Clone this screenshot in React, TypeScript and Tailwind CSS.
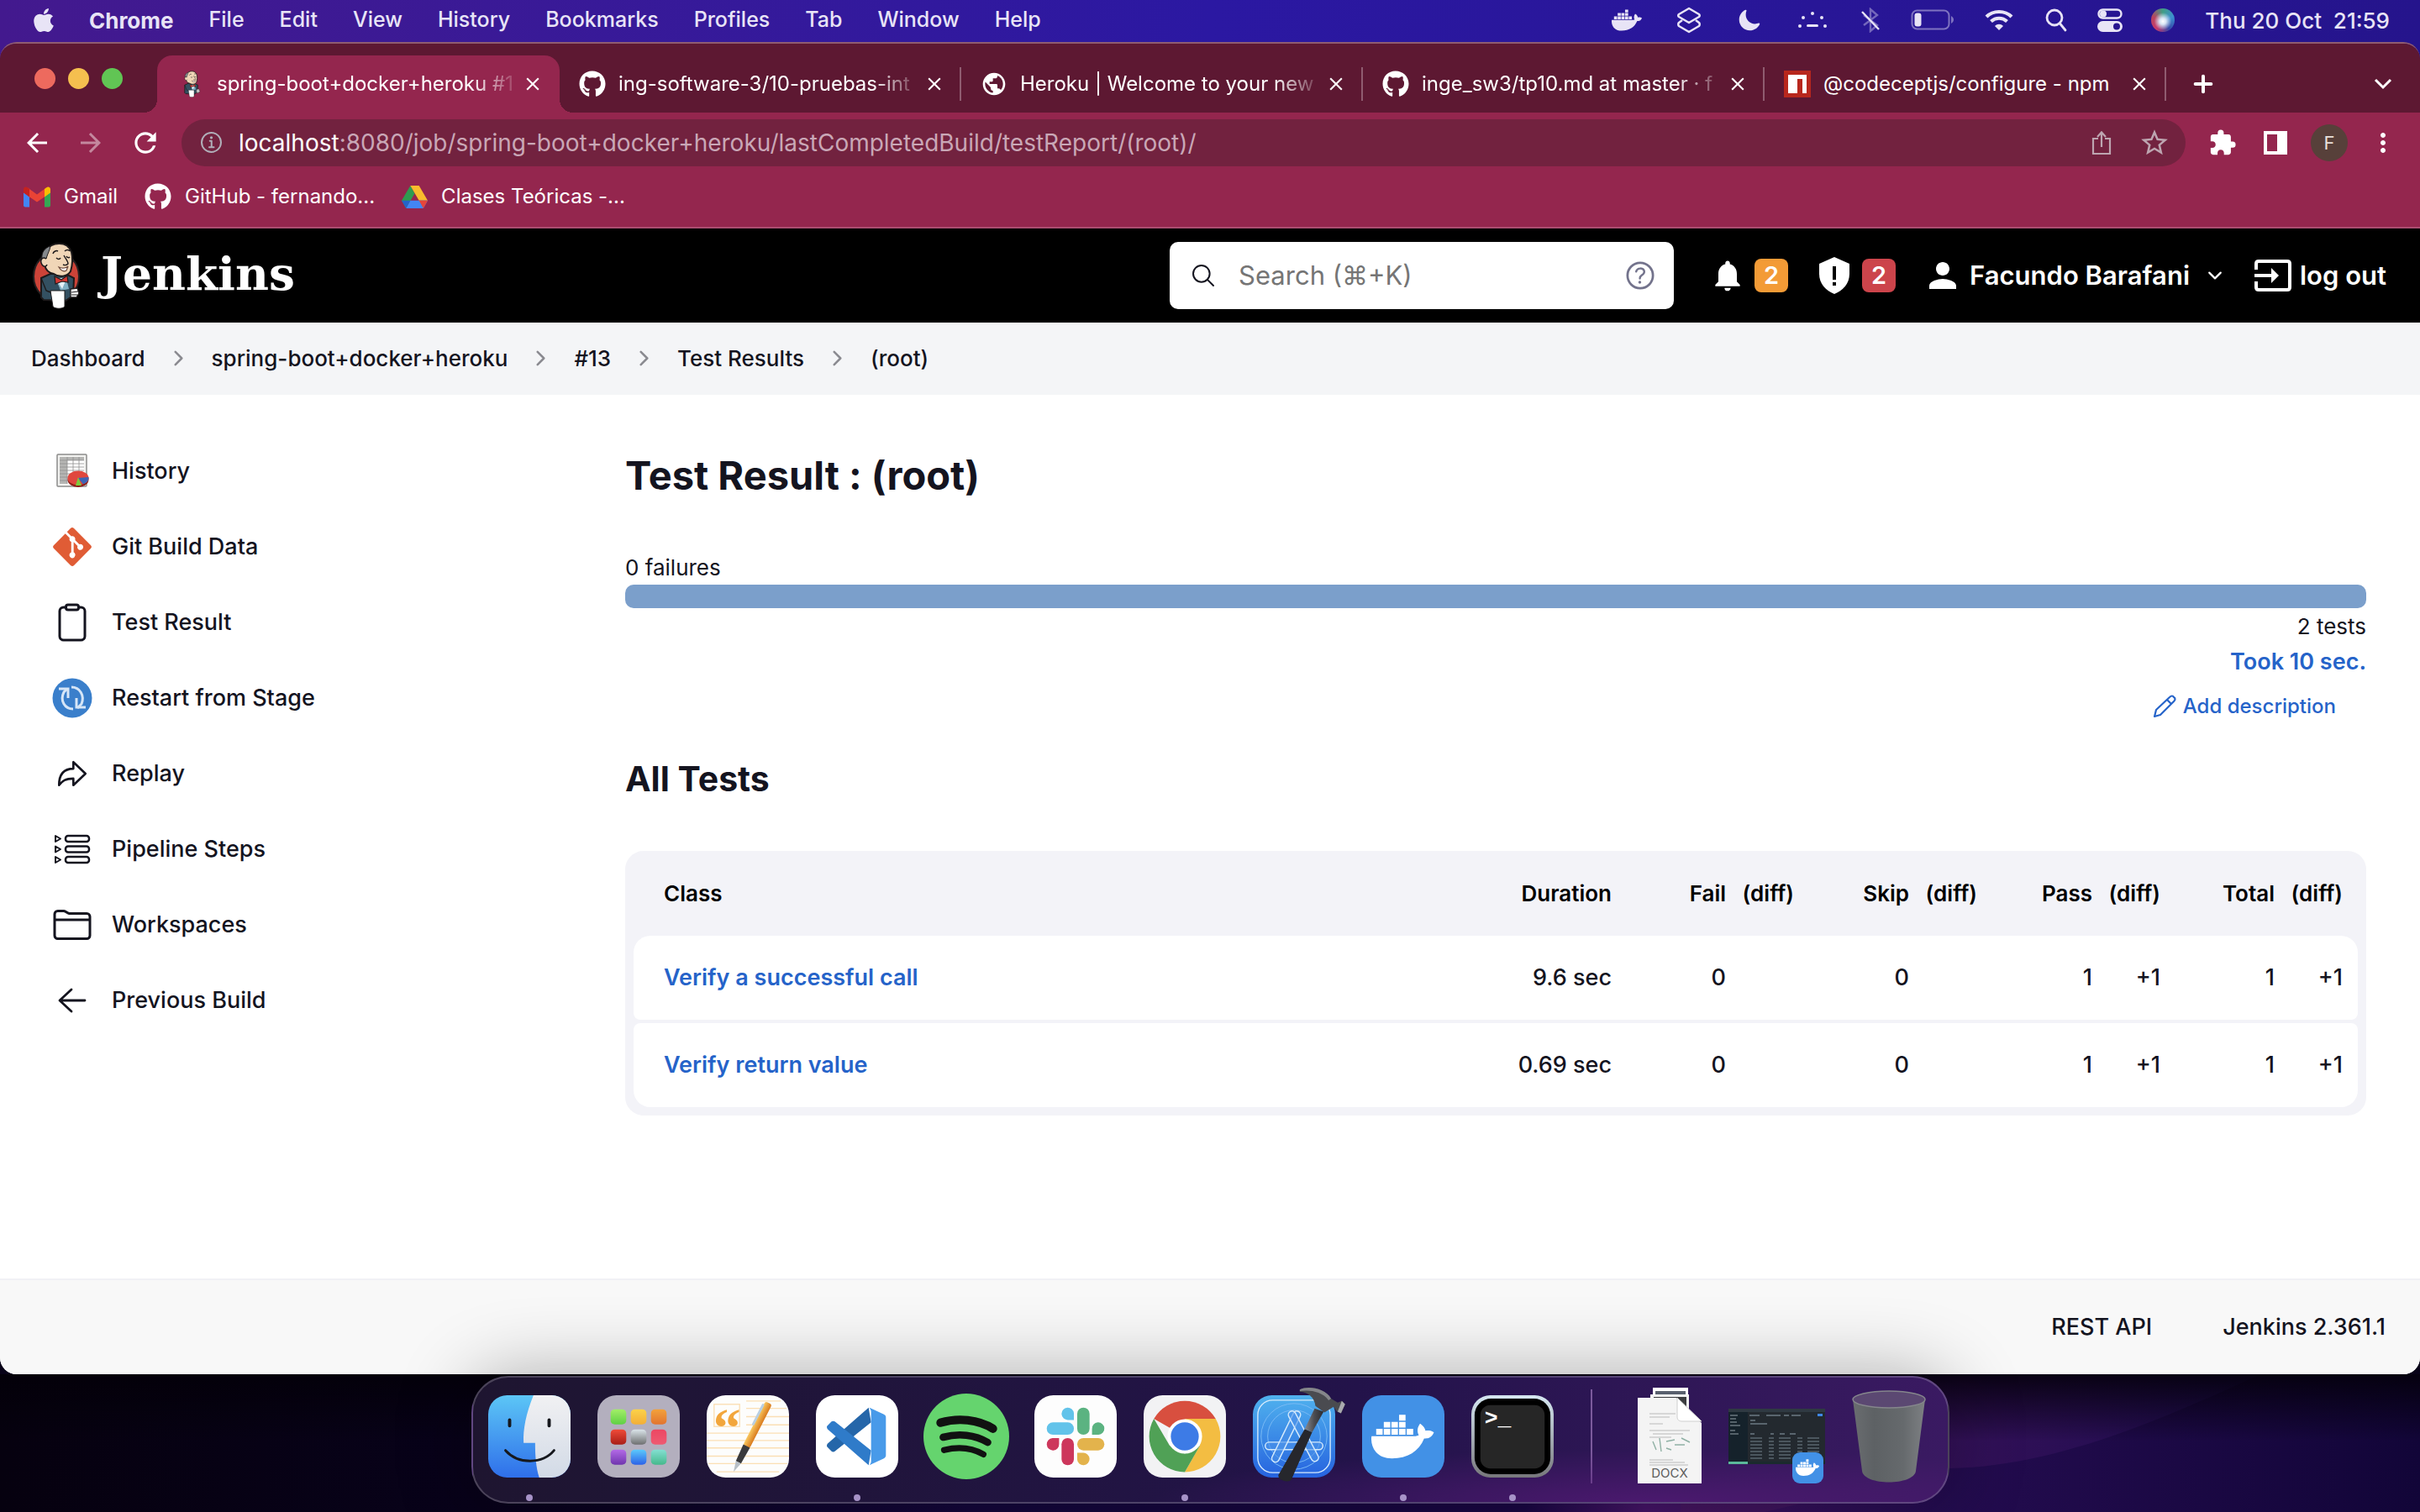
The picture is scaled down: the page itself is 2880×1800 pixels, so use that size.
import type { ReactNode } from "react";
import { FaApple, FaDocker, FaGithub, FaGitAlt } from "react-icons/fa";
import {
  MdArrowBack,
  MdArrowForward,
  MdClose,
  MdExtension,
  MdMoreVert,
  MdNotifications,
  MdPerson,
  MdPublic,
  MdRefresh,
  MdStarBorder,
} from "react-icons/md";
import {
  IoArrowRedoOutline,
  IoChevronDownOutline,
  IoChevronForwardOutline,
  IoClipboardOutline,
  IoFolderOutline,
  IoHelpCircleOutline,
  IoInformationCircleOutline,
  IoMoon,
  IoSearchOutline,
} from "react-icons/io5";
import { Plus } from "lucide-react";

/* ---------- Jenkins butler ---------- */

function Butler({ className, ring = true }: { className: string; ring?: boolean }) {
  return (
    <svg viewBox="0 0 58 80" className={className} aria-hidden="true">
      {ring && <ellipse cx="29" cy="41" rx="27" ry="29" fill="#cc4338" stroke="#231f20" strokeWidth="2" />}
      <path d="M11 43 L22 38 L40 38 L50 43 L49 64 L40 70 L14 69 L11 66 Z" fill="#335061" stroke="#1d1a1b" strokeWidth="2" />
      <path d="M11 43 L17 58 L22 60" fill="none" stroke="#1d1a1b" strokeWidth="1.4" />
      <path d="M28 44 L43 42 L39 56 L34 56 Z" fill="#e6f1f7" />
      <path d="M30 46 L36 56 L41 44 L44 56 L34 58 Z" fill="#81b0c4" />
      <path d="M17 10 C23 0 42 -2 47 12 C49 20 48 28 46 35 C42 41 33 43 26 38 C19 37 16 32 15 27 C13 20 14 16 17 10 Z" fill="#f0d6b7" stroke="#1d1a1b" strokeWidth="2" />
      <path d="M22 5 C15 7 11 13 12 20 L17 20 C18 16 20 12 21 9 Z" fill="#85898c" stroke="#1d1a1b" strokeWidth="1" />
      <path d="M17 20 C12 17 9 22 12 27 C14 30 17 30 18 27" fill="#f0d6b7" stroke="#1d1a1b" strokeWidth="1.5" />
      <path d="M25 14 C26 11 29 10 31 11 M39 11 C41 9 44 9 45 11 M29 19 C31 21 33 21 34 19 M41 17 C42 19 44 19 45 18" fill="none" stroke="#1d1a1b" strokeWidth="1.5" />
      <path d="M38 16 C40 20 43 23 43 26 C41 28 39 28 37 27" fill="none" stroke="#1d1a1b" strokeWidth="1.4" />
      <path d="M32 30 C36 32 41 31 43 29 L41 34 C38 36 34 34 32 30 Z" fill="#fff" stroke="#6d4a3c" strokeWidth="1.2" />
      <path d="M27 41 L35 45 L42 40 L43 48 L36 47 L28 50 Z" fill="#d33833" stroke="#1d1a1b" strokeWidth="1.2" />
      <path d="M22 58 L39 58 L39 77 C36 80 28 80 25 77 Z" fill="#fff" stroke="#1d1a1b" strokeWidth="1" />
      <path d="M46 56 L54 55 L56 61 L53 66 L46 66 Z" fill="#fff" stroke="#1d1a1b" strokeWidth="1.3" />
      <path d="M47 60 L55 59 M47 63 L54 63" stroke="#1d1a1b" strokeWidth="1" />
    </svg>
  );
}

/* ---------- macOS menu bar ---------- */

const menus = ["File", "Edit", "View", "History", "Bookmarks", "Profiles", "Tab", "Window", "Help"];

function MenuBar() {
  return (
    <header className="flex h-[50px] shrink-0 items-center justify-between bg-linear-to-r from-[#43198e] via-[#2b18a2] to-[#25148c] pr-9 pl-9 pb-0.5 text-[25px] font-medium text-[#e8e4f6]">
      <div className="flex items-center gap-[38px]">
        <FaApple className="size-8" />
        <nav className="flex items-center gap-[42px]">
          <button className="text-[26px] font-bold">Chrome</button>
          {menus.map((m) => (
            <button key={m}>{m}</button>
          ))}
        </nav>
      </div>
      <div className="flex items-center">
        <FaDocker className="mr-[42px] size-9" />
        <svg viewBox="0 0 28 32" className="mr-[44px] h-8 w-7" fill="none" stroke="currentColor" strokeWidth="2.5" strokeLinejoin="round">
          <path d="M14 2 L26 9 C27 10 27 11 26 12 L14 19 L2 12 C1 11 1 10 2 9 Z" />
          <path d="M6 16 L2 19 C1 20 1 22 2 23 L14 30 L26 23 C27 22 27 20 26 19 L22 16" />
        </svg>
        <IoMoon className="mr-[44px] size-7" />
        <svg viewBox="0 0 34 20" className="mr-[40px] h-5 w-[34px]" fill="currentColor">
          <circle cx="17" cy="2" r="2" />
          <circle cx="6" cy="7" r="2" />
          <circle cx="28" cy="7" r="2" />
          <circle cx="2" cy="17" r="2" />
          <circle cx="32" cy="17" r="2" />
          <rect x="10" y="15" width="14" height="3" rx="1.5" />
        </svg>
        <svg viewBox="0 0 24 30" className="mr-[36px] h-[30px] w-6" fill="none" stroke="currentColor" strokeWidth="2.4">
          <path d="M4 9 L20 21 L12 28 V2 L20 9 L4 21" opacity=".4" />
          <path d="M2 5 L22 26" />
        </svg>
        <svg viewBox="0 0 52 26" className="mr-[36px] h-[26px] w-[52px]">
          <rect x="1.5" y="1.5" width="44" height="22" rx="6" fill="none" stroke="currentColor" strokeWidth="2" opacity=".45" />
          <rect x="4.500" y="4.500" width="8" height="16" rx="3" fill="currentColor" />
          <path d="M48 8 C52 10 52 15 48 17 Z" fill="currentColor" opacity=".45" />
        </svg>
        <svg viewBox="0 0 34 26" className="mr-[38px] h-[26px] w-[34px]" fill="none" stroke="currentColor" strokeWidth="4.200">
          <path d="M2 9 C10 1 24 1 32 9" />
          <path d="M7.500 14.500 C13 9.500 21 9.500 26.500 14.500" />
          <path d="M12 20 C15 17 19 17 22 20 L17 25 Z" fill="currentColor" stroke="none" />
        </svg>
        <svg viewBox="0 0 26 28" className="mr-[36px] h-7 w-[26px]" fill="none" stroke="currentColor" strokeWidth="2.800" strokeLinecap="round">
          <circle cx="11" cy="11" r="9" />
          <path d="M17.500 18 L24 26" />
        </svg>
        <svg viewBox="0 0 30 28" className="mr-[34px] h-7 w-[30px]">
          <rect x="1.500" y="1.500" width="27" height="10" rx="5" fill="none" stroke="currentColor" strokeWidth="2.400" />
          <circle cx="7" cy="6.500" r="4" fill="currentColor" />
          <rect y="15" width="30" height="13" rx="6.500" fill="currentColor" />
          <circle cx="23" cy="21.500" r="4" fill="#27148f" />
        </svg>
        <span className="mr-9 size-7 rounded-full bg-[radial-gradient(circle_at_50%_55%,#fff_0%,#d8e6f5_18%,transparent_50%),conic-gradient(#3f9f86,#3d8fd0,#3548a8,#c63b6c,#b8445e,#3f9f86)]" />
        <time className="text-[26px] whitespace-pre">Thu 20 Oct  21:59</time>
      </div>
    </header>
  );
}

/* ---------- Chrome window ---------- */

function Npm() {
  return (
    <svg viewBox="0 0 32 32" className="size-8 shrink-0">
      <path fill="#b8271d" d="M0 0h32v32H0z" />
      <path fill="#fff" d="M5 5h22v22h-5V10h-6v17H5z" />
    </svg>
  );
}

type TabProps = { icon: ReactNode; title: string; active?: boolean; fade?: boolean; line?: boolean };

function Tab({ icon, title, active, fade, line }: TabProps) {
  return (
    <div
      className={
        active
          ? "relative flex h-[68px] max-w-[479px] min-w-0 flex-1 items-center rounded-t-[18px] bg-[#94264e] pr-[18px] pl-[24px] text-white"
          : "relative flex h-[68px] max-w-[478px] min-w-0 flex-1 items-center pr-[18px] pl-[23px] text-white"
      }
    >
      {active && (
        <>
          <span className="absolute bottom-0 -left-4 size-4 bg-[radial-gradient(circle_at_0_0,transparent_16px,#94264e_16px)]" />
          <span className="absolute -right-4 bottom-0 size-4 bg-[radial-gradient(circle_at_100%_0,transparent_16px,#94264e_16px)]" />
        </>
      )}
      <span className="flex w-8 shrink-0 justify-center">{icon}</span>
      <span
        className={
          fade
            ? "ml-[15px] min-w-0 flex-1 overflow-hidden text-[24px] whitespace-nowrap [mask-image:linear-gradient(to_right,black_calc(100%-60px),transparent)]"
            : "ml-[15px] min-w-0 flex-1 overflow-hidden text-[24px] whitespace-nowrap"
        }
      >
        {title}
      </span>
      <button aria-label={`Close ${title}`} className="flex size-7 shrink-0 items-center justify-center">
        <MdClose className="size-[26px]" />
      </button>
      {line && <span className="absolute right-0 h-10 w-0.5 bg-[#8f5c70]" />}
    </div>
  );
}

function TabStrip() {
  return (
    <div className="flex h-[82px] items-end bg-[#5d1832]">
      <div className="flex h-[68px] w-[187px] shrink-0 items-center gap-[15px] pb-[14px] pl-[41px]">
        <button aria-label="Close window" className="size-[25px] rounded-full bg-[#ed6a5e]" />
        <button aria-label="Minimise window" className="size-[25px] rounded-full bg-[#f5bf4f]" />
        <button aria-label="Zoom window" className="size-[25px] rounded-full bg-[#61c554]" />
      </div>
      <div className="flex min-w-0 flex-1">
        <Tab active fade icon={<Butler ring={false} className="h-8 w-7" />} title="spring-boot+docker+heroku #1" />
        <Tab line fade icon={<FaGithub className="size-8" />} title="ing-software-3/10-pruebas-int" />
        <Tab line fade icon={<MdPublic className="size-8" />} title="Heroku | Welcome to your new" />
        <Tab line fade icon={<FaGithub className="size-8" />} title="inge_sw3/tp10.md at master · f" />
        <Tab line icon={<Npm />} title="@codeceptjs/configure - npm" />
        <button aria-label="New tab" className="ml-[26px] flex h-[68px] w-9 items-center justify-center text-white">
          <Plus className="size-8" strokeWidth={3} />
        </button>
      </div>
      <button aria-label="Search tabs" className="mr-[30px] flex h-[68px] w-7 items-center justify-center text-white">
        <svg viewBox="0 0 22 14" className="w-[22px]" fill="none" stroke="currentColor" strokeWidth="3">
          <path d="M2 2 L11 11 L20 2" />
        </svg>
      </button>
    </div>
  );
}

function Toolbar() {
  return (
    <div className="flex h-[72px] items-center pr-[26px] pl-[26px] text-white">
      <button aria-label="Back">
        <MdArrowBack className="size-9" />
      </button>
      <button aria-label="Forward" className="ml-7 opacity-45">
        <MdArrowForward className="size-9" />
      </button>
      <button aria-label="Reload" className="ml-7">
        <MdRefresh className="size-[38px]" />
      </button>
      <div className="relative ml-6 flex h-14 min-w-0 flex-1 items-center rounded-full bg-[#72223f] pr-[18px] pl-5">
        <IoInformationCircleOutline className="size-8 text-[#b0aeb8]" />
        <div className="relative ml-4 flex-1">
          <p className="text-[28px] whitespace-nowrap text-[#c9a7b6]">
            <span className="text-white">localhost</span>:8080/job/spring-boot+docker+heroku/lastCompletedBuild/testReport/(root)/
          </p>
          <input
            aria-label="Address and search bar"
            className="absolute inset-0 w-full bg-transparent outline-none"
          />
        </div>
        <button aria-label="Share" className="mr-8 text-[#bda5b0]">
          <svg viewBox="0 0 24 30" className="h-[30px] w-6" fill="none" stroke="currentColor" strokeWidth="2.200">
            <path d="M8 10 H2 V28 H22 V10 H16 M12 20 V3 M7 8 L12 2.500 L17 8" />
          </svg>
        </button>
        <button aria-label="Bookmark this page" className="text-[#bda5b0]">
          <MdStarBorder className="size-[38px]" />
        </button>
      </div>
      <button aria-label="Extensions" className="ml-[27px]">
        <MdExtension className="size-[34px]" />
      </button>
      <button aria-label="Side panel" className="ml-8">
        <svg viewBox="0 0 28 28" className="size-7">
          <path fill="currentColor" fillRule="evenodd" d="M0 0H28V28H0Z M4 4V24H16V4Z" />
        </svg>
      </button>
      <button className="ml-7 size-11 rounded-full bg-[#57403a] text-[22px] text-[#e8e0da]">F</button>
      <button aria-label="Menu" className="ml-6">
        <MdMoreVert className="size-9" />
      </button>
    </div>
  );
}

function Bookmarks() {
  return (
    <nav className="flex h-[66px] items-center border-b-2 border-[#ab4d70] pb-[8px] pl-7 text-[24px] text-white">
      <a href="#gmail" className="flex items-center gap-4">
        <svg viewBox="0 0 32 24" className="h-[25px] w-8">
          <path fill="#4285f4" d="M0 4 L7 9 V24 H2 C1 24 0 23 0 22Z" />
          <path fill="#34a853" d="M25 9 L32 4 V22 C32 23 31 24 30 24 H25Z" />
          <path fill="#ea4335" d="M5 1 L16 9 L27 1 V10.500 L16 18 L5 10.500Z" />
          <path fill="#c5221f" d="M0 3 C0 0 3 -1 5 1 L7 2.500 V12 L0 7Z" />
          <path fill="#fbbc04" d="M32 3 C32 0 29 -1 27 1 L25 2.500 V12 L32 7Z" />
        </svg>
        Gmail
      </a>
      <a href="#github" className="ml-8 flex items-center gap-4">
        <FaGithub className="size-8" />
        GitHub - fernando...
      </a>
      <a href="#clases" className="ml-8 flex items-center gap-4">
        <svg viewBox="0 0 30 26" className="h-[27px] w-[31px]">
          <path fill="#2f9b50" d="M10 0 L15 9 L5 26 L0 17Z" />
          <path fill="#f9bb2d" d="M10 0 H20 L30 17 H20Z" />
          <path fill="#4285f4" d="M10 17 H30 L25 26 H5Z" />
          <path fill="#2563c9" d="M0 17 H10 L5 26Z" />
          <path fill="#e6453a" d="M20 17 H30 L25 26Z" />
        </svg>
        Clases Teóricas -...
      </a>
    </nav>
  );
}

/* ---------- Jenkins page ---------- */

function JenkinsHeader() {
  return (
    <header className="flex h-28 items-center bg-black pr-10 pl-[38px] text-white">
      <a href="#home" className="flex items-center gap-6">
        <Butler className="h-20 w-[58px]" />
        <span className="pb-1.5 font-['DejaVu_Serif',serif] text-[55px] leading-none font-bold">Jenkins</span>
      </a>
      <label className="ml-auto flex h-20 w-[600px] items-center rounded-[10px] bg-white px-6">
        <IoSearchOutline className="size-8 shrink-0 text-[#14141f]" />
        <input
          type="search"
          aria-label="Search"
          placeholder="Search (⌘+K)"
          className="ml-[26px] min-w-0 flex-1 bg-transparent text-[31px] text-black outline-none placeholder:text-[#757575]"
        />
        <IoHelpCircleOutline className="size-11 shrink-0 -mr-1.5 text-[#73738c]" />
      </label>
      <button aria-label="Notifications" className="ml-[42px] flex items-center gap-[10px]">
        <MdNotifications className="size-11" />
        <span className="flex h-10 w-10 items-center justify-center rounded-lg bg-[#f39b36] text-[29px] font-semibold">2</span>
      </button>
      <button aria-label="Security warnings" className="ml-9 flex items-center gap-[14px]">
        <svg viewBox="0 0 38 44" className="h-11 w-[38px]">
          <path fill="#fff" d="M19 0 L37 8 V20 C37 32 29 40 19 44 C9 40 1 32 1 20 V8 Z" />
          <path fill="#000" d="M17 11h4v16h-4z M17 30h4v4h-4z" />
        </svg>
        <span className="flex h-10 w-10 items-center justify-center rounded-lg bg-[#cc444b] text-[29px] font-semibold">2</span>
      </button>
      <button className="ml-8 flex items-center text-[31px] font-semibold">
        <MdPerson className="size-12" />
        <span className="ml-2">Facundo Barafani</span>
        <IoChevronDownOutline className="ml-[18px] size-6" />
      </button>
      <a href="#logout" className="ml-[35px] flex items-center gap-[10px] text-[31px] font-semibold">
        <svg viewBox="0 0 44 38" className="h-[38px] w-11" fill="none" stroke="currentColor" strokeWidth="4">
          <path d="M2 12 V5 C2 3 3 2 5 2 H39 C41 2 42 3 42 5 V33 C42 35 41 36 39 36 H5 C3 36 2 35 2 33 V26" />
          <path d="M0 19 H24" />
          <path d="M20 10 L29 19 L20 28 Z" fill="currentColor" stroke="none" />
        </svg>
        log out
      </a>
    </header>
  );
}

const crumbs = ["Dashboard", "spring-boot+docker+heroku", "#13", "Test Results", "(root)"];

function Breadcrumbs() {
  return (
    <nav aria-label="Breadcrumb" className="bg-[#f4f5f7]">
      <ol className="flex h-[86px] items-center gap-[26px] pb-0.5 pl-[37px] text-[26px] font-medium text-[#14141f]">
        {crumbs.map((c, i) => (
          <li key={c} className="flex items-center gap-[26px]">
            {i > 0 && <IoChevronForwardOutline className="size-[27px] text-[#8a8a90]" />}
            <a href={`#crumb-${i}`}>{c}</a>
          </li>
        ))}
      </ol>
    </nav>
  );
}

function HistoryIcon() {
  return (
    <svg viewBox="0 0 48 48" className="size-12">
      <rect x="6" y="4" width="35" height="38" rx="1" fill="#f2f2f0" stroke="#8c8c8a" strokeWidth="1.500" />
      <rect x="9" y="7" width="29" height="32" fill="#fff" />
      <path fill="#b5b5b3" d="M9 7h9v32H9z M18 7h20v4H18z" />
      <path stroke="#8f8f8f" strokeWidth=".8" d="M9 11H38 M9 15H38 M9 19H38 M9 23H38 M9 27H38 M9 31H38 M9 35H38 M18 7V39 M25 7V39 M32 7V39" />
      <ellipse cx="31" cy="34" rx="12.500" ry="9" fill="#8f1d16" />
      <ellipse cx="31" cy="32" rx="12.500" ry="8.500" fill="#e0473e" />
      <path d="M31 32 L43.500 31 C44 35 41 38 37 39.500 Z" fill="#3d64b5" />
      <path d="M31 31 L35 41 H28 Z" fill="#7ccb3d" />
    </svg>
  );
}

function RestartIcon() {
  return (
    <svg viewBox="0 0 48 48" className="size-12" fill="none" stroke="#d6e6f7" strokeWidth="3">
      <circle cx="24" cy="24" r="23.500" fill="#3a7fcb" stroke="none" />
      <path d="M25 37 C15 37 9 27 14 17 L18 13 M23 11 C33 11 39 21 35 31 L30 36" />
      <path d="M8 13 H19 V24 M40 35 H29 V24" />
    </svg>
  );
}

function PipelineIcon() {
  return (
    <svg viewBox="0 0 48 48" className="size-12" fill="none" stroke="currentColor" strokeWidth="2.500" strokeLinejoin="round">
      {[9, 21.5, 34].map((y) => (
        <g key={y}>
          <path d={`M4 ${y - 1} V${y + 6} L10 ${y + 2.5} Z`} strokeWidth="2" />
          <rect x="16" y={y - 1} width="28" height="7" rx="3" />
        </g>
      ))}
    </svg>
  );
}

function BackIcon() {
  return (
    <svg viewBox="0 0 48 48" className="size-12" fill="none" stroke="currentColor" strokeWidth="2.800" strokeLinecap="round" strokeLinejoin="round">
      <path d="M23 11 L9 24 L23 37 M10 24 H39" />
    </svg>
  );
}

const tasks: { label: string; icon: ReactNode }[] = [
  { label: "History", icon: <HistoryIcon /> },
  { label: "Git Build Data", icon: <FaGitAlt className="size-[52px] shrink-0 text-[#e05c35]" /> },
  { label: "Test Result", icon: <IoClipboardOutline className="size-12" /> },
  { label: "Restart from Stage", icon: <RestartIcon /> },
  { label: "Replay", icon: <IoArrowRedoOutline className="size-[42px]" /> },
  { label: "Pipeline Steps", icon: <PipelineIcon /> },
  { label: "Workspaces", icon: <IoFolderOutline className="size-12" /> },
  { label: "Previous Build", icon: <BackIcon /> },
];

function Sidebar() {
  return (
    <aside className="w-[744px] shrink-0 pt-[46px] pl-[62px]">
      <ul>
        {tasks.map((t) => (
          <li key={t.label}>
            <a href={`#${t.label.replace(/ /g, "-")}`} className="flex h-[90px] items-center text-[27px] font-medium text-[#14141f]">
              <span className="mr-[23px] flex w-12 justify-center">{t.icon}</span>
              {t.label}
            </a>
          </li>
        ))}
      </ul>
    </aside>
  );
}

const rows = [
  { name: "Verify a successful call", duration: "9.6 sec" },
  { name: "Verify return value", duration: "0.69 sec" },
];

const body = "h-[100px] bg-white p-0 text-right font-medium";

function ResultsTable() {
  return (
    <div className="mt-[58px] rounded-[22px] bg-[#f3f3f8] px-[10px] pb-[6px]">
      <table className="w-full table-fixed border-separate border-spacing-x-0 border-spacing-y-1 text-[27px] text-[#14141f]">
        <colgroup>
          <col />
          <col className="w-[240px]" />
          <col className="w-[136px]" />
          <col className="w-[81px]" />
          <col className="w-[137px]" />
          <col className="w-[81px]" />
          <col className="w-[137px]" />
          <col className="w-[81px]" />
          <col className="w-[136px]" />
          <col className="w-[99px]" />
        </colgroup>
        <thead>
          <tr className="h-[93px] text-right text-[26px] text-black [&>th]:p-0 [&>th]:font-semibold">
            <th scope="col" className="text-left">
              <span className="pl-9">Class</span>
            </th>
            <th scope="col">Duration</th>
            <th scope="col">Fail</th>
            <th scope="col">(diff)</th>
            <th scope="col">Skip</th>
            <th scope="col">(diff)</th>
            <th scope="col">Pass</th>
            <th scope="col">(diff)</th>
            <th scope="col">Total</th>
            <th scope="col">
              <span className="pr-[18px]">(diff)</span>
            </th>
          </tr>
        </thead>
        <tbody>
          {rows.map((r, i) => (
            <tr key={r.name}>
              <td
                className={
                  i === 0
                    ? "h-[100px] rounded-tl-[20px] rounded-bl-[8px] bg-white p-0 pl-9"
                    : "h-[100px] rounded-tl-[8px] rounded-bl-[20px] bg-white p-0 pl-9"
                }
              >
                <a href={`#test-${i}`} className="font-semibold text-[#2563c9]">
                  {r.name}
                </a>
              </td>
              <td className={body}>{r.duration}</td>
              <td className={body}>0</td>
              <td className={body} />
              <td className={body}>0</td>
              <td className={body} />
              <td className={body}>1</td>
              <td className={body}>+1</td>
              <td className={body}>1</td>
              <td
                className={
                  i === 0
                    ? "rounded-tr-[20px] rounded-br-[8px] bg-white p-0 pr-[18px] text-right font-medium"
                    : "rounded-tr-[8px] rounded-br-[20px] bg-white p-0 pr-[18px] text-right font-medium"
                }
              >
                +1
              </td>
            </tr>
          ))}
        </tbody>
      </table>
    </div>
  );
}

function TestReport() {
  return (
    <main className="min-w-0 flex-1 pt-[66px] pr-16 text-[26px] text-[#14141f]">
      <h1 className="text-[47px] leading-[60px] font-bold">Test Result : (root)</h1>
      <p className="mt-[60px] leading-10">0 failures</p>
      <div role="progressbar" aria-label="Passed tests" aria-valuenow={100} className="h-7 rounded-[10px] bg-[#7b9fcb]" />
      <p className="pt-px text-right leading-[42px]">2 tests</p>
      <p className="text-right leading-[42px]">
        <a href="#history" className="text-[27px] font-semibold text-[#2563c9]">
          Took 10 sec.
        </a>
      </p>
      <div className="mt-3 flex justify-end pr-9">
        <button className="flex h-10 items-center gap-2 text-[24px] font-medium text-[#2563c9]">
          <svg viewBox="0 0 28 28" className="size-7" fill="none" stroke="currentColor" strokeWidth="2.200" strokeLinejoin="round">
            <path d="M2 26 L4 18 L20 3 C22 1 24 1 25 3 C27 4 27 6 25 8 L9 24 Z M17 6 L22 11" />
          </svg>
          Add description
        </button>
      </div>
      <h2 className="mt-[38px] text-[41px] leading-[56px] font-bold">All Tests</h2>
      <ResultsTable />
    </main>
  );
}

/* ---------- Dock ---------- */

function Tile({ children, running, label }: { children: ReactNode; running?: boolean; label: string }) {
  return (
    <button aria-label={label} className="relative flex size-[98px] items-center justify-center">
      {children}
      {running && <span className="absolute -bottom-7 size-2 rounded-full bg-[#a793c8]" />}
    </button>
  );
}

function Finder() {
  return (
    <svg viewBox="0 0 100 100" className="size-full">
      <defs>
        <linearGradient id="finderBlue" x2="0" y2="1">
          <stop stopColor="#5cc6f6" />
          <stop offset="1" stopColor="#2f6fea" />
        </linearGradient>
        <linearGradient id="finderGrey" x2="0" y2="1">
          <stop stopColor="#f1f1f3" />
          <stop offset="1" stopColor="#d2dae6" />
        </linearGradient>
        <clipPath id="finderClip">
          <rect width="100" height="100" rx="23" />
        </clipPath>
      </defs>
      <g clipPath="url(#finderClip)">
        <rect width="100" height="100" fill="url(#finderBlue)" />
        <path d="M55 0 C46 22 42 42 43 58 H57 C57 74 58 88 62 100 H100 V0 Z" fill="url(#finderGrey)" />
        <g fill="none" stroke="#16181d" strokeLinecap="round">
          <path d="M26 30 V37 M74 30 V37" strokeWidth="4" />
          <path d="M21 67 C36 84 66 84 80 67" strokeWidth="3" />
        </g>
      </g>
    </svg>
  );
}

const pads = [
  ["#a3ee68", "#5fd044"],
  ["#fbd24a", "#f3ae37"],
  ["#f2a23b", "#e2742f"],
  ["#ef4b39", "#a81e17"],
  ["#dbe5ea", "#6d6f70"],
  ["#ec4763", "#ee5a72"],
  ["#b36ae6", "#6f35ae"],
  ["#5cc9fb", "#2c62e8"],
  ["#84dfd2", "#45b98c"],
];

function Launchpad() {
  return (
    <svg viewBox="0 0 100 100" className="size-full">
      <defs>
        {pads.map(([a, b], i) => (
          <linearGradient key={a} id={`pad${i}`} x2="0" y2="1">
            <stop stopColor={a} />
            <stop offset="1" stopColor={b} />
          </linearGradient>
        ))}
      </defs>
      <rect width="100" height="100" rx="23" fill="#b3afbe" />
      {pads.map(([a], i) => (
        <rect key={a} x={16 + (i % 3) * 24.5} y={17 + Math.floor(i / 3) * 24.5} width="19" height="18.500" rx="5" fill={`url(#pad${i})`} />
      ))}
    </svg>
  );
}

function Pages() {
  return (
    <svg viewBox="0 0 100 100" className="size-full overflow-visible">
      <defs>
        <linearGradient id="pen" x2="1" y2="0">
          <stop stopColor="#f9c860" />
          <stop offset="1" stopColor="#d97a1d" />
        </linearGradient>
      </defs>
      <rect width="100" height="100" rx="23" fill="#fdfdfc" />
      <path stroke="#fbdfb4" strokeWidth="1.400" d="M48 7H90 M48 16H97 M48 26H100 M48 36H100 M0 46H100 M0 55H100 M0 64H100 M0 74H100 M2 83H98 M12 93H88" />
      <rect x="9" y="11" width="31" height="27" fill="none" stroke="#fbdfb4" strokeWidth="1.400" />
      <text x="8" y="62" fontFamily="Liberation Serif, serif" fontWeight="bold" fontSize="67" fill="#f2a63c">
        “
      </text>
      <g transform="rotate(27 54 50)">
        <rect x="50" y="4" width="9" height="60" rx="3" fill="url(#pen)" />
        <rect x="48" y="8" width="3" height="29" rx="1.500" fill="#b9cfe3" />
        <path d="M50 63 H59 L58 85 H51 Z" fill="#3a3a3c" />
        <path d="M51 85 H58 L54.500 98 Z" fill="#b8bfc6" />
      </g>
    </svg>
  );
}

function VsCode() {
  return (
    <svg viewBox="0 0 100 100" className="size-full">
      <rect width="100" height="100" rx="23" fill="#fff" />
      <path d="M64 15 L14 59 C13 61 13 62 14 63 L19 68 C20 69 22 69 23 68 L67 33 Z" fill="#2566a9" />
      <path d="M64 85 L14 41 C13 39 13 38 14 37 L19 32 C20 31 22 31 23 32 L67 67 Z" fill="#2f7bc9" />
      <path d="M65 15 L82 23 C84 24 85 25 85 27 V73 C85 75 84 76 82 77 L65 85 C64 85 67 84 67 80 V20 C67 17 65 16 65 15 Z" fill="#489ae9" />
    </svg>
  );
}

function Spotify() {
  return (
    <svg viewBox="0 0 100 100" className="size-[102px] shrink-0">
      <circle cx="50" cy="50" r="50" fill="#65d46e" />
      <g fill="none" stroke="#111" strokeLinecap="round">
        <path d="M20 34 C40 28 64 30 81 41" strokeWidth="10" />
        <path d="M23 51 C41 46 60 48 75 57" strokeWidth="8.500" />
        <path d="M24 66 C40 62 56 63 70 71" strokeWidth="7" />
      </g>
    </svg>
  );
}

function Slack() {
  return (
    <svg viewBox="0 0 100 100" className="size-full">
      <rect width="100" height="100" rx="23" fill="#fdfdfd" />
      <g fill="#62c3ea">
        <rect x="15" y="33" width="33" height="15" rx="7.500" />
        <path d="M48 30 H41 A7.500 7.500 0 1 1 48 22 Z" />
      </g>
      <g fill="#5bb381">
        <rect x="52" y="15" width="15" height="33" rx="7.500" />
        <path d="M70 48 V41 A7.500 7.500 0 1 1 78 48 Z" />
      </g>
      <g fill="#e3b34c">
        <rect x="52" y="52" width="33" height="15" rx="7.500" />
        <path d="M52 70 H59 A7.500 7.500 0 1 1 52 78 Z" />
      </g>
      <g fill="#cd375c">
        <rect x="33" y="52" width="15" height="33" rx="7.500" />
        <path d="M30 52 V59 A7.500 7.500 0 1 1 22 52 Z" />
      </g>
    </svg>
  );
}

function Chrome() {
  return (
    <svg viewBox="0 0 100 100" className="size-full">
      <rect width="100" height="100" rx="23" fill="#f2f2f4" />
      <path d="M50 50 L12.500 28.500 A43.300 43.300 0 0 1 87.500 28.500 Z" fill="#d84f3f" />
      <path d="M50 28.500 H87.500 A43.300 43.300 0 0 1 50 93.300 L68.500 60.700 Z" fill="#f3bd42" />
      <path d="M12.500 28.500 A43.300 43.300 0 0 0 50 93.300 L68.500 61 L50 71 L31.500 61 Z" fill="#50a156" />
      <circle cx="50" cy="50" r="21" fill="#fff" />
      <circle cx="50" cy="50" r="17" fill="#3d7be6" />
    </svg>
  );
}

function Xcode() {
  return (
    <svg viewBox="0 0 100 100" className="size-full overflow-visible">
      <defs>
        <linearGradient id="xcodeBg" x2="0" y2="1">
          <stop stopColor="#50b2ee" />
          <stop offset="1" stopColor="#2663df" />
        </linearGradient>
        <linearGradient id="hammer" x2="1" y2="0">
          <stop stopColor="#8a8b90" />
          <stop offset=".5" stopColor="#4b4c51" />
          <stop offset="1" stopColor="#2a2b2f" />
        </linearGradient>
      </defs>
      <rect width="100" height="100" rx="23" fill="url(#xcodeBg)" />
      <rect x="6" y="6" width="88" height="88" rx="18" fill="none" stroke="#d5eafc" strokeWidth="1.400" />
      <g fill="none" stroke="#79b9f4" strokeWidth="1">
        <circle cx="50" cy="50" r="40" />
        <circle cx="50" cy="50" r="32" />
      </g>
      <g fill="#4c93ea" fillOpacity=".6" stroke="#d5eafc" strokeWidth="1.500">
        <rect x="15" y="57" width="70" height="9" rx="4.500" />
        <rect x="36" y="16" width="9" height="68" rx="4.500" transform="rotate(26 40 50)" />
        <rect x="57" y="16" width="9" height="68" rx="4.500" transform="rotate(-28 61 50)" />
      </g>
      <path d="M63 41 L72 45 L47 102 C45 107 30 104 31 97 Z" fill="#26272c" />
      <path d="M75 16 L86 20 L72 45 L63 41 Z" fill="url(#hammer)" />
      <path d="M57 -7 C68 -12 88 -8 95 4 L103 9 L108 7 L112 11 L107 22 L102 20 L98 14 L87 21 L76 13 C75 3 67 -4 57 -4 Z" fill="#4a4b50" />
      <path d="M57 -7 C68 -12 88 -8 95 4 L92 6 C84 -5 68 -7 57 -5 Z" fill="#85868b" />
      <path d="M108 7 L112 11 L107 22 L103 20 Z" fill="#a9aaae" />
    </svg>
  );
}

function DockerTile({ className }: { className: string }) {
  return (
    <span className={className}>
      <FaDocker className="size-[76%]" />
    </span>
  );
}

function Terminal() {
  return (
    <svg viewBox="0 0 100 100" className="size-full">
      <defs>
        <linearGradient id="termEdge" x2="0" y2="1">
          <stop stopColor="#d6e8f2" />
          <stop offset="1" stopColor="#77777b" />
        </linearGradient>
      </defs>
      <rect width="100" height="100" rx="23" fill="url(#termEdge)" />
      <rect x="4" y="4" width="92" height="92" rx="20" fill="#000" />
      <rect x="11" y="12" width="78" height="77" rx="12" fill="#262626" />
      <text x="16" y="36" fontFamily="Liberation Mono, monospace" fontWeight="bold" fontSize="27" fill="#fff">
        &gt;_
      </text>
    </svg>
  );
}

function DocxStack() {
  return (
    <svg viewBox="0 0 76 116" className="h-[116px] w-[76px]">
      <rect x="18" y="0" width="42" height="40" fill="#fff" />
      <rect x="21" y="4" width="36" height="8" fill="#59606e" />
      <rect x="15" y="8" width="46" height="40" fill="#f4f4f4" />
      <rect x="19" y="11" width="39" height="12" fill="#3b3c3f" />
      <path d="M0 12 H46 L76 42 V114 H0 Z" fill="#f4f4f4" />
      <path d="M47 12 L76 40 H53 C49 40 47 38 47 35 Z" fill="#fff" stroke="#cfcfcf" strokeWidth="1" />
      <g stroke="#b9b9b9" strokeWidth="1.200">
        <path d="M14 31H45 M14 35H38 M14 43H30 M14 51H62 M18 55H54 M14 59H40 M14 86H42 M14 89H56 M14 92H60" />
      </g>
      <path d="M18 64 L22 74 M26 60 L28 76 M34 64 L44 62 M44 68 H56 M34 72 L40 74 M52 60 L62 65" stroke="#8fb0a4" strokeWidth="1.400" />
      <text x="38" y="107" textAnchor="middle" fontFamily="Inter, sans-serif" fontSize="15" fill="#5e5e5e">
        DOCX
      </text>
    </svg>
  );
}

function DockerWindow() {
  return (
    <span className="relative flex h-[98px] w-[115px] items-center">
      <svg viewBox="0 0 115 66" className="h-[66px] w-full">
        <rect width="115" height="66" fill="#23292f" />
        <rect width="23" height="66" fill="#15222b" />
        <rect width="115" height="4" fill="#2f3a42" />
        <rect y="63" width="23" height="3" fill="#5bb89a" />
        <rect x="23" y="63" width="92" height="3" fill="#1b2a2e" />
        <path stroke="#6c7a84" strokeWidth="1.500" d="M25 8H37 M45 8H62 M66 8H72 M75 8H86 M26 14H32 M26 18H46 M26 30H31 M50 30H54 M61 30H67 M73 30H80" />
        <path stroke="#59656f" strokeWidth="1.500" strokeDasharray="14 8 6 6" d="M26 35H112 M26 39H112 M26 43H112 M26 47H112 M26 51H112 M26 55H80 M26 59H74" />
        <rect x="106" y="6" width="6" height="3" fill="#3f86e8" />
        <path stroke="#93a0a8" strokeWidth="1.200" d="M2 8H11 M2 12H9 M2 16H10 M2 20H14 M2 26H8 M2 30H12" />
      </svg>
      <DockerTile className="absolute right-0.5 -bottom-[7px] flex size-[37px] items-center justify-center rounded-[9px] bg-[#4291e6] text-white" />
    </span>
  );
}

function Trash() {
  return (
    <svg viewBox="0 0 88 110" className="h-[110px] w-[88px]">
      <defs>
        <linearGradient id="bin" x2="1" y2="0">
          <stop stopColor="#6a6d70" />
          <stop offset=".3" stopColor="#5d6164" />
          <stop offset=".7" stopColor="#666a6d" />
          <stop offset="1" stopColor="#7d8083" />
        </linearGradient>
      </defs>
      <path d="M1 11 L12 96 C14 114 74 114 76 96 L87 11 Z" fill="url(#bin)" />
      <ellipse cx="44" cy="11" rx="43" ry="10" fill="#5b4872" stroke="#85868c" strokeWidth="1.500" />
    </svg>
  );
}

function Dock() {
  return (
    <footer className="relative z-10 flex flex-col items-center pt-0.5 pb-[10px]">
      <svg viewBox="0 0 2880 164" preserveAspectRatio="none" className="absolute inset-0 -z-20 size-full" aria-hidden="true">
        <defs>
          <linearGradient id="night">
            <stop stopColor="#06010f" />
            <stop offset=".2" stopColor="#08021a" />
            <stop offset=".4" stopColor="#14063c" />
            <stop offset=".63" stopColor="#1a0745" />
            <stop offset=".68" stopColor="#47156a" />
            <stop offset=".8" stopColor="#240c50" />
            <stop offset="1" stopColor="#120538" />
          </linearGradient>
          <linearGradient id="ridge">
            <stop stopColor="#471663" />
            <stop offset="1" stopColor="#1c0b4d" />
          </linearGradient>
          <linearGradient id="fade" x2="0" y2="1">
            <stop stopColor="#030008" stopOpacity=".85" />
            <stop offset="1" stopColor="#030008" stopOpacity="0" />
          </linearGradient>
        </defs>
        <rect width="2880" height="164" fill="url(#night)" />
        <path d="M2000 0 H2690 C2560 60 2440 110 2320 112 L2100 164 H2000 Z" fill="url(#ridge)" />
        <rect width="2880" height="80" fill="url(#fade)" />
      </svg>
      <div className="relative flex h-[152px] items-center gap-8 rounded-[44px] border-2 border-white/20 bg-linear-to-r from-[#1e1530] via-[#23134a] via-60% to-[#3a1a62] pr-[26px] pb-2 pl-[18px] shadow-[0_0_90px_rgba(0,0,0,0.32)]">
        <span className="pointer-events-none absolute inset-0 rounded-[42px] bg-[radial-gradient(ellipse_at_80%_100%,rgba(84,26,118,0.75)_0%,transparent_30%)]" />
        <Tile label="Finder" running><Finder /></Tile>
        <Tile label="Launchpad"><Launchpad /></Tile>
        <Tile label="Pages"><Pages /></Tile>
        <Tile label="Visual Studio Code" running><VsCode /></Tile>
        <Tile label="Spotify"><Spotify /></Tile>
        <Tile label="Slack"><Slack /></Tile>
        <Tile label="Google Chrome" running><Chrome /></Tile>
        <Tile label="Xcode"><Xcode /></Tile>
        <Tile label="Docker" running>
          <DockerTile className="flex size-full items-center justify-center rounded-[23px] bg-[#4291e6] text-white" />
        </Tile>
        <Tile label="Terminal" running><Terminal /></Tile>
        <span className="mr-[22px] ml-3 h-28 w-0.5 bg-[#7b5a9c]" />
        <button aria-label="Documents" className="relative">
          <DocxStack />
        </button>
        <button aria-label="Docker Desktop window" className="relative">
          <DockerWindow />
        </button>
        <button aria-label="Trash" className="relative">
          <Trash />
        </button>
      </div>
    </footer>
  );
}

export default function App() {
  return (
    <div className="flex min-h-screen w-full flex-col bg-[#080218] font-[Inter,'DejaVu_Sans',sans-serif]">
      <MenuBar />
      <div className="bg-linear-to-r from-[#43198e] via-[#2b18a2] to-[#25148c]">
        <div className="overflow-hidden rounded-t-[20px] border-t-2 border-[#8f5c70]">
          <TabStrip />
        </div>
      </div>
      <div className="flex flex-1 flex-col overflow-hidden rounded-b-[20px] bg-white">
        <div className="bg-[#94264e]">
          <Toolbar />
          <Bookmarks />
        </div>
        <JenkinsHeader />
        <Breadcrumbs />
        <div className="flex flex-1">
          <Sidebar />
          <TestReport />
        </div>
        <footer className="flex h-[114px] items-center justify-end gap-[84px] border-t-2 border-[#f1f1f5] bg-[#f8f8f8] pr-[41px] text-[27px] font-medium text-[#14141f]">
          <a href="#api">REST API</a>
          <a href="#version">Jenkins 2.361.1</a>
        </footer>
      </div>
      <Dock />
    </div>
  );
}
